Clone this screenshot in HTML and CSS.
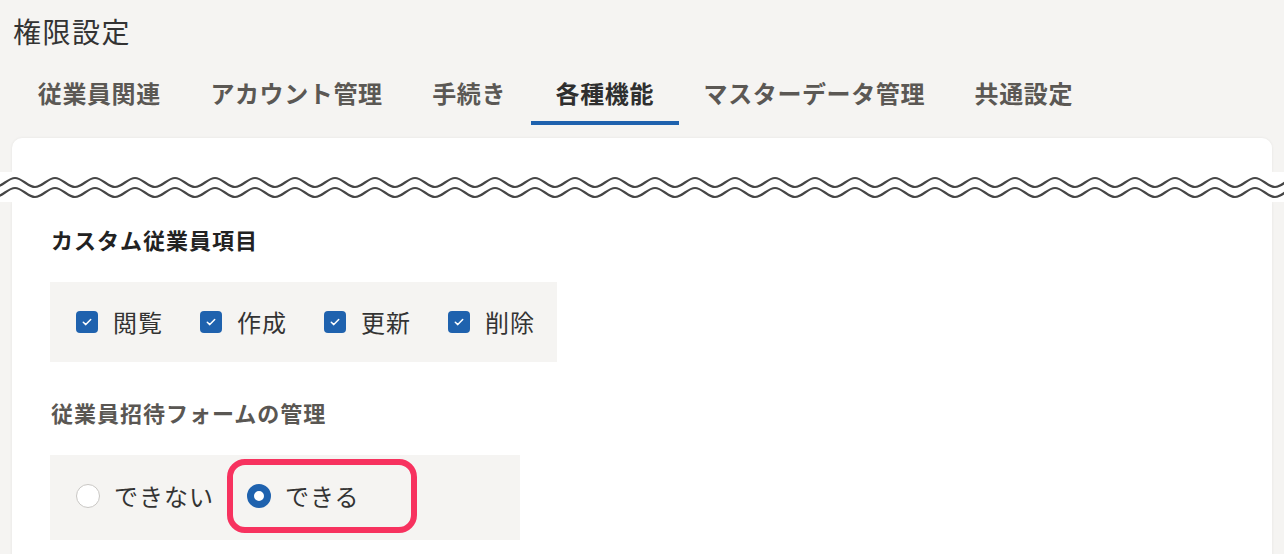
FILE: index.html
```html
<!DOCTYPE html>
<html lang="ja">
<head>
<meta charset="utf-8">
<title>権限設定</title>
<link rel="stylesheet" href="styles.css">
</head>
<body>
<div class="page">
  <header class="head">
    <h1 class="title">権限設定</h1>
    <nav class="tabs">
      <a class="tab">従業員関連</a>
      <a class="tab">アカウント管理</a>
      <a class="tab">手続き</a>
      <a class="tab active">各種機能</a>
      <a class="tab">マスターデータ管理</a>
      <a class="tab">共通設定</a>
    </nav>
  </header>

  <div class="card-top"></div>
  <div class="wave">
    <svg class="wave-svg" width="100%" height="30" xmlns="http://www.w3.org/2000/svg">
      <defs>
        <pattern id="wv" patternUnits="userSpaceOnUse" width="40" height="30">
          <path d="M-5 15 C2.3 15 7.7 6 15 6 S27.7 15 35 15 S47.7 6 55 6" fill="none" stroke="#464646" stroke-width="2.2"/>
          <path d="M-5 25 C2.3 25 7.7 16 15 16 S27.7 25 35 25 S47.7 16 55 16" fill="none" stroke="#464646" stroke-width="2.2"/>
        </pattern>
      </defs>
      <rect x="0" y="0" width="100%" height="30" fill="url(#wv)"/>
    </svg>
  </div>

  <section class="card-body">
    <h2 class="sec-title">カスタム従業員項目</h2>
    <div class="opt-box checks">
      <label class="check"><span class="cb"><svg width="22" height="22" viewBox="0 0 22 22"><path d="M7.3 11.2 L9.8 13.6 L14.7 8.6" fill="none" stroke="#fff" stroke-width="1.5" stroke-linecap="round" stroke-linejoin="round"/></svg></span><span class="lbl">閲覧</span></label>
      <label class="check"><span class="cb"><svg width="22" height="22" viewBox="0 0 22 22"><path d="M7.3 11.2 L9.8 13.6 L14.7 8.6" fill="none" stroke="#fff" stroke-width="1.5" stroke-linecap="round" stroke-linejoin="round"/></svg></span><span class="lbl">作成</span></label>
      <label class="check"><span class="cb"><svg width="22" height="22" viewBox="0 0 22 22"><path d="M7.3 11.2 L9.8 13.6 L14.7 8.6" fill="none" stroke="#fff" stroke-width="1.5" stroke-linecap="round" stroke-linejoin="round"/></svg></span><span class="lbl">更新</span></label>
      <label class="check"><span class="cb"><svg width="22" height="22" viewBox="0 0 22 22"><path d="M7.3 11.2 L9.8 13.6 L14.7 8.6" fill="none" stroke="#fff" stroke-width="1.5" stroke-linecap="round" stroke-linejoin="round"/></svg></span><span class="lbl">削除</span></label>
    </div>

    <h2 class="sec-title muted">従業員招待フォームの管理</h2>
    <div class="opt-box radios">
      <label class="radio"><span class="rb"></span><span class="lbl">できない</span></label>
      <div class="highlight">
        <label class="radio"><span class="rb on"></span><span class="lbl">できる</span></label>
      </div>
    </div>
  </section>
</div>
</body>
</html>
```

FILE: styles.css
```css
* { box-sizing: border-box; }

html, body {
  margin: 0;
  padding: 0;
  background: #f5f4f2;
  font-family: "Noto Sans CJK JP", "Noto Sans", sans-serif;
  color: #333;
  overflow: hidden;
}

.page {
  width: 1284px;
  height: 554px;
  overflow: hidden;
}

.head {
  padding: 11px 13px 0 13px;
}

.title {
  margin: 0;
  font-size: 28px;
  line-height: 40px;
  font-weight: 400;
  letter-spacing: 1.5px;
  color: #333;
}

.tabs {
  display: flex;
  margin-top: 18px;
}

.tab {
  display: block;
  padding: 8px 24.8px 12px 24.8px;
  font-size: 24px;
  line-height: 32px;
  font-weight: 700;
  letter-spacing: 0.6px;
  color: #5b5854;
  border-bottom: 4px solid transparent;
}

.tab.active {
  color: #2f2f2f;
  border-bottom-color: #1f62ae;
}

.card-top {
  margin: 13px 12px 0 12px;
  height: 34px;
  background: #fff;
  border-radius: 10px 10px 0 0;
  box-shadow: 0 0 3px rgba(0, 0, 0, 0.07);
}

.wave {
  position: relative;
  height: 30px;
  background: #fff;
}

.wave-svg {
  display: block;
}

.card-body {
  margin: 0 12px;
  min-height: 400px;
  background: #fff;
  padding: 21px 38px 0 38px;
  box-shadow: 0 0 3px rgba(0, 0, 0, 0.07);
}

.sec-title {
  margin: 0;
  padding-left: 1px;
  font-size: 22px;
  line-height: 32px;
  font-weight: 700;
  letter-spacing: 1px;
  color: #222;
}

.sec-title.muted {
  margin-top: 34px;
  color: #5a5753;
}

.opt-box {
  background: #f5f4f2;
  display: flex;
  align-items: center;
  margin-top: 27px;
}

.checks {
  width: 507px;
  height: 80px;
  padding: 0 0 0 26px;
  gap: 37px;
}

.check {
  display: flex;
  align-items: center;
}

.cb {
  width: 22px;
  height: 22px;
  border-radius: 4px;
  background: #1f62ae;
  display: block;
  margin-right: 15px;
}

.cb svg { display: block; }

.lbl {
  font-size: 24px;
  line-height: 32px;
  letter-spacing: 1px;
  color: #333;
}

.radios {
  width: 470px;
  height: 85px;
  margin-top: 27px;
  padding: 0 0 3px 26px;
}

.radio {
  display: flex;
  align-items: center;
}

.rb {
  width: 24px;
  height: 24px;
  border-radius: 50%;
  background: #fff;
  border: 1.5px solid #c9c7c4;
  margin-right: 14px;
  display: block;
}

.rb.on {
  border: 7.5px solid #1f62ae;
  background: #fff;
}

.highlight {
  margin-left: 13px;
  width: 190px;
  height: 74px;
  border: 6px solid #f7325f;
  border-radius: 18px;
  padding-left: 14px;
  display: flex;
  align-items: center;
}
```
